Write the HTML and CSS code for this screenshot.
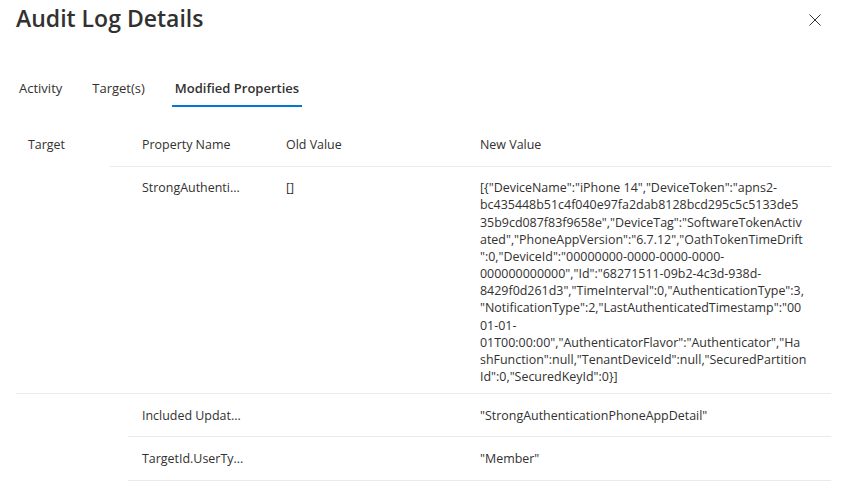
FILE: index.html
```html
<!DOCTYPE html>
<html lang="en">
<head>
<meta charset="utf-8">
<title>Audit Log Details</title>
<link rel="stylesheet" href="styles.css">
</head>
<body>
<div class="panel">
  <header class="head">
    <h1 class="title">Audit Log Details</h1>
    <button class="close" aria-label="Close">
      <svg width="12" height="12" viewBox="0 0 12 12" aria-hidden="true"><path d="M0.5 0.5 L11.5 11.5 M11.5 0.5 L0.5 11.5" stroke="#323130" stroke-width="1" fill="none"/></svg>
    </button>
  </header>
  <nav class="tabs">
    <span class="tab">Activity</span>
    <span class="tab">Target(s)</span>
    <span class="tab active">Modified Properties</span>
  </nav>
  <div class="table">
    <div class="thead">
      <div class="tcol">Target</div>
      <div class="nhead">
        <div class="h-prop">Property Name</div>
        <div class="c-old">Old Value</div>
        <div class="c-new">New Value</div>
      </div>
    </div>
    <div class="group first">
      <div class="tcell"></div>
      <div class="nrow">
        <div class="c-prop" title="StrongAuthenticationPhoneAppDetail">StrongAuthenti...</div>
        <div class="c-old">[]</div>
        <div class="c-new json">[{"DeviceName":"iPhone 14","DeviceToken":"apns2-<br>bc435448b51c4f040e97fa2dab8128bcd295c5c5133de5<br>35b9cd087f83f9658e","DeviceTag":"SoftwareTokenActiv<br>ated","PhoneAppVersion":"6.7.12","OathTokenTimeDrift<br>":0,"DeviceId":"00000000-0000-0000-0000-<br>000000000000","Id":"68271511-09b2-4c3d-938d-<br>8429f0d261d3","TimeInterval":0,"AuthenticationType":3,<br>"NotificationType":2,"LastAuthenticatedTimestamp":"00<br>01-01-<br>01T00:00:00","AuthenticatorFlavor":"Authenticator","Ha<br>shFunction":null,"TenantDeviceId":null,"SecuredPartition<br>Id":0,"SecuredKeyId":0}]</div>
      </div>
    </div>
    <div class="group">
      <div class="tcell"></div>
      <div class="nrow line">
        <div class="c-prop" title="Included Updated Properties">Included Updat...</div>
        <div class="c-old"></div>
        <div class="c-new">"StrongAuthenticationPhoneAppDetail"</div>
      </div>
    </div>
    <div class="group">
      <div class="tcell"></div>
      <div class="nrow line">
        <div class="c-prop" title="TargetId.UserType">TargetId.UserTy...</div>
        <div class="c-old"></div>
        <div class="c-new">"Member"</div>
      </div>
    </div>
  </div>
</div>
</body>
</html>
```

FILE: styles.css
```css
* { box-sizing: border-box; }
html, body { margin: 0; padding: 0; background: #ffffff; }
body {
  font-family: "Open Sans", "Noto Sans", sans-serif;
  color: #323130;
  font-size: 12.45px;
  line-height: 17.17px;
}
.panel {
  width: 841px;
  padding: 0 10px 0 16px;
}
.head {
  display: flex;
  justify-content: space-between;
  align-items: flex-start;
  height: 36px;
}
.title {
  margin: 0;
  font-size: 23px;
  font-weight: 600;
  line-height: 36px;
  color: #323130;
}
.close {
  margin-top: 4px;
  width: 32px;
  height: 32px;
  padding: 0;
  border: 0;
  background: transparent;
  display: flex;
  align-items: center;
  justify-content: center;
}
.tabs {
  display: flex;
  gap: 24px;
  margin-top: 35px;
}
.tab {
  padding: 8px 3px 8px;
  font-size: 13px;
  line-height: 18px;
  border-bottom: 2px solid transparent;
  color: #323130;
}
.tab.active {
  font-weight: 600;
  border-bottom-color: #0078d4;
}
.table {
  margin-top: 16px;
}
.thead {
  display: flex;
}
.tcol {
  width: 94px;
  padding: 13px 0 13px 12px;
}
.nhead {
  flex: 1;
  display: flex;
  border-bottom: 1px solid #edebe9;
  padding: 13px 0;
}
.h-prop {
  width: 176px;
  padding-left: 32px;
}
.c-old {
  width: 194px;
}
.c-new {
  flex: 1;
  white-space: nowrap;
}
.group {
  display: flex;
}
.group.first {
  border-bottom: 1px solid #edebe9;
}
.tcell {
  width: 112px;
}
.nrow {
  flex: 1;
  display: flex;
  padding: 12px 0 8px;
}
.nrow.line {
  padding: 12.5px 0;
  border-bottom: 1px solid #edebe9;
}
.c-prop {
  width: 158px;
  padding-left: 14px;
  white-space: nowrap;
}
```
